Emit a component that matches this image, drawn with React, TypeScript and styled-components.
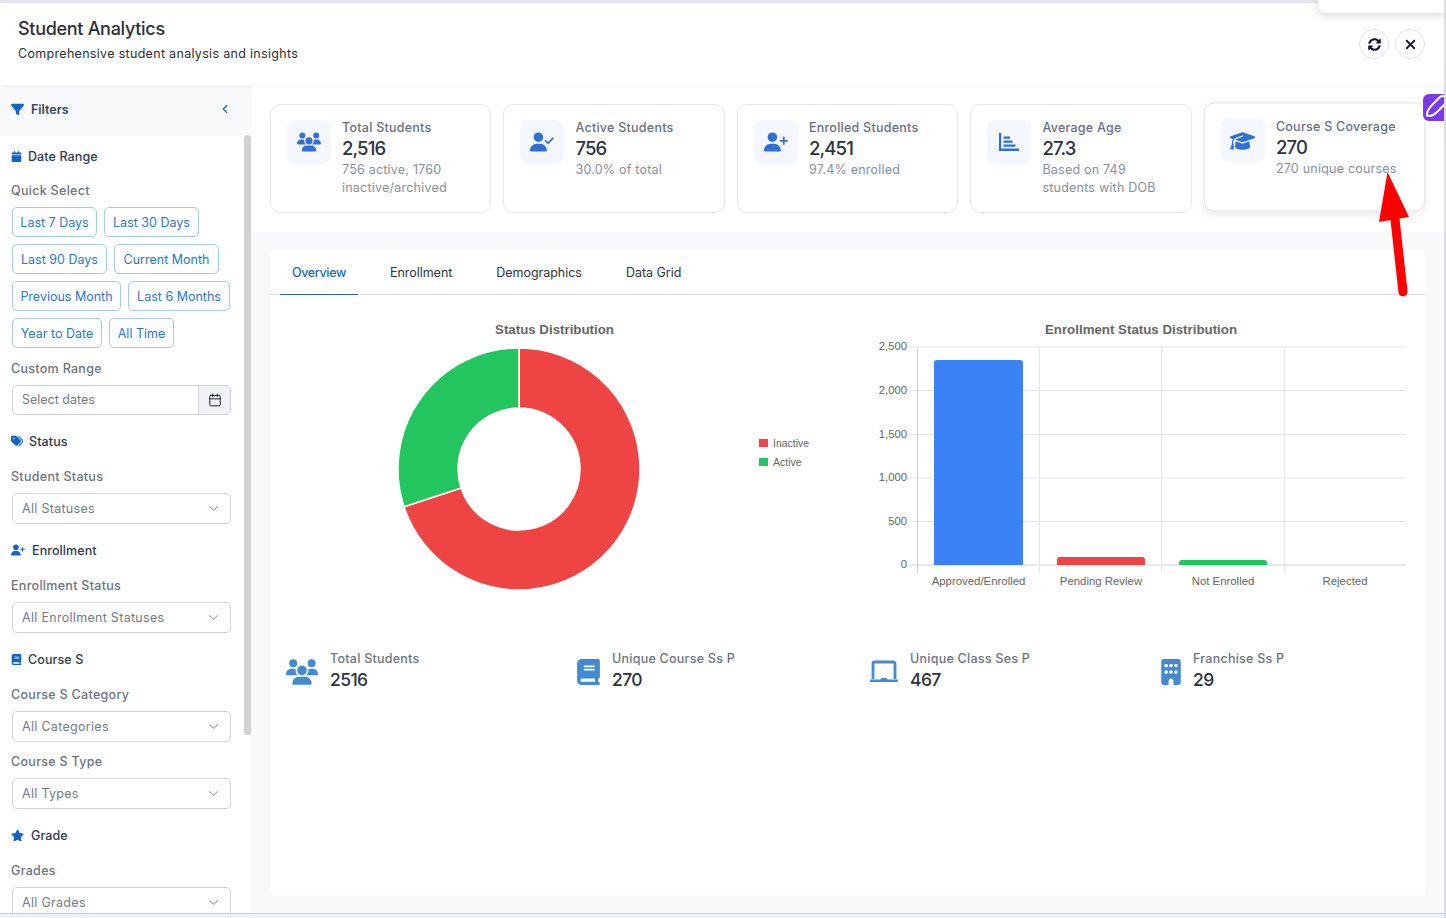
import React from 'react';
import styled, { createGlobalStyle } from 'styled-components';
import { FaUsers, FaUserCheck, FaUserPlus, FaGraduationCap, FaBook, FaBuilding, FaStar, FaTags, FaFilter, FaCalendar, FaXmark } from 'react-icons/fa6';
import { FaSyncAlt } from 'react-icons/fa';
import { ChevronDown, ChevronLeft, Calendar } from 'lucide-react';

const Global = createGlobalStyle`
  html, body { margin: 0; padding: 0; background: #fff; overflow: hidden; }
  * { box-sizing: border-box; }
  body { font-family: Inter, "Noto Sans", sans-serif; }
`;

const Page = styled.div`
  position: relative;
  width: 1446px;
  height: 918px;
  overflow: hidden;
  display: flex;
  flex-direction: column;
  background: #fff;
  border-right: 2px solid #d9dde3;
`;
const TopRule = styled.div`
  height: 3px;
  flex: none;
  background: #e4e8ee;
`;
const Header = styled.header`
  height: 82px;
  flex: none;
  display: flex;
  align-items: flex-start;
  justify-content: space-between;
  padding: 15px 19px 0 18px;
  background: #fff;
  position: relative;
  z-index: 2;
  box-shadow: 0 1px 4px rgba(30, 40, 60, 0.05);
`;
const Title = styled.h1`
  margin: 0;
  font-size: 18px;
  line-height: 22px;
  font-weight: 500;
  letter-spacing: -0.3px;
  color: #2b2f36;
`;
const Subtitle = styled.p`
  margin: 4px 0 0;
  font-size: 12.5px;
  line-height: 20px;
  letter-spacing: 0.31px;
  color: #2b2f36;
`;
const HeaderActions = styled.div`
  display: flex;
  gap: 6px;
  padding-top: 11px;
`;
const RoundButton = styled.button`
  width: 30px;
  height: 30px;
  border-radius: 50%;
  border: 1px solid #dfe2e6;
  background: #fff;
  color: #12152b;
  display: flex;
  align-items: center;
  justify-content: center;
  padding: 0;
  font-size: 13px;
`;
const Body = styled.div`
  flex: 1;
  min-height: 0;
  display: flex;
`;
const Sidebar = styled.aside`
  width: 251px;
  flex: none;
  position: relative;
  display: flex;
  flex-direction: column;
  overflow: hidden;
  background: #fff;
`;
const SidebarHead = styled.div`
  height: 50px;
  flex: none;
  display: flex;
  align-items: center;
  justify-content: space-between;
  padding: 0 19px 2px 11px;
  background: #f8f9fb;
  color: #1565c0;
`;
const FilterTitle = styled.div`
  display: flex;
  align-items: center;
  gap: 7px;
  font-size: 12.5px;
  font-weight: 600;
  color: #3a4656;
  svg { color: #1565c0; }
`;
const SidebarBody = styled.div`
  flex: 1;
  padding: 11px 20px 0 12px;
`;
const Thumb = styled.div`
  position: absolute;
  right: 0;
  top: 50px;
  width: 7px;
  height: 600px;
  border-radius: 4px 4px 3px 3px;
  background: #d2d2d2;
`;
const Heading = styled.div<{ $gap?: number; $after?: number }>`
  display: flex;
  align-items: center;
  gap: ${(p) => p.$gap ?? 6}px;
  height: 20px;
  margin: 0 0 ${(p) => p.$after ?? 16}px -1px;
  font-size: 12.5px;
  font-weight: 500;
  letter-spacing: 0.1px;
  color: #2f3b4c;
  svg { color: #1565c0; }
`;
const Label = styled.div`
  height: 20px;
  line-height: 20px;
  margin: 0 0 6px -1px;
  font-size: 12.5px;
  font-weight: 500;
  letter-spacing: 0.3px;
  color: #6b7480;
`;
const Pills = styled.div`
  display: flex;
  flex-wrap: wrap;
  gap: 7px;
  margin-bottom: 11px;
`;
const Pill = styled.button<{ $w: number }>`
  width: ${(p) => p.$w}px;
  height: 30px;
  padding: 0;
  border: 1px solid #a9c7f5;
  border-radius: 5px;
  background: #fff;
  color: #2a78cf;
  font-family: inherit;
  font-size: 12.5px;
  white-space: nowrap;
`;
const InputGroup = styled.div`
  display: flex;
  height: 29.5px;
  border: 1px solid #cdd2da;
  border-radius: 5px;
  overflow: hidden;
  margin-bottom: 16.5px;
`;
const InputText = styled.div`
  flex: 1;
  display: flex;
  align-items: center;
  padding-left: 9px;
  font-size: 12.5px;
  color: #737c88;
`;
const InputAddon = styled.div`
  width: 32px;
  display: flex;
  align-items: center;
  justify-content: center;
  background: #f0f2f6;
  border-left: 1px solid #cdd2da;
  color: #12152b;
`;
const Select = styled.div<{ $after?: number }>`
  display: flex;
  align-items: center;
  justify-content: space-between;
  height: 30.5px;
  padding: 0 9px;
  border: 1px solid #cdd2da;
  border-radius: 5px;
  margin-bottom: ${(p) => p.$after ?? 16.5}px;
  font-size: 12.5px;
  letter-spacing: 0.3px;
  color: #737c88;
  svg { color: #7a828e; }
`;
const Main = styled.main`
  flex: 1;
  min-width: 0;
  display: flex;
  flex-direction: column;
  background: #f8f9fb;
`;
const CardsBand = styled.section`
  height: 147px;
  flex: none;
  padding: 19px 19px 0;
  background: #fff;
  display: grid;
  grid-template-columns: repeat(5, 1fr);
  gap: 12.4px;
`;
const Card = styled.article<{ $raised?: boolean }>`
  height: 109px;
  display: flex;
  gap: 11px;
  padding: 15px 16px 0 16px;
  background: #fff;
  border: 1px solid #e2e7ef;
  border-radius: 10px;
  ${(p) => p.$raised && 'transform: translateY(-1.5px); box-shadow: 0 3px 9px rgba(30, 40, 70, 0.09);'}
`;
const CardIcon = styled.div`
  width: 44px;
  height: 44px;
  flex: none;
  display: flex;
  align-items: center;
  justify-content: center;
  border-radius: 8px;
  background: #f4f7fe;
  color: #2f6fd6;
`;
const CardText = styled.div`
  min-width: 0;
  flex: 1;
`;
const CardTitle = styled.div`
  font-size: 12.5px;
  font-weight: 500;
  line-height: 16px;
  letter-spacing: 0.25px;
  white-space: nowrap;
  color: #667080;
`;
const CardValue = styled.div`
  font-size: 18.5px;
  font-weight: 500;
  line-height: 25px;
  letter-spacing: -0.85px;
  color: #2b3240;
`;
const CardDesc = styled.div`
  font-size: 12.5px;
  line-height: 18px;
  letter-spacing: 0.22px;
  color: #87909d;
`;
const Panel = styled.section`
  width: 1155px;
  height: 644px;
  margin: 19px 0 0 19px;
  background: #fff;
`;
const Tabs = styled.nav`
  height: 44px;
  display: flex;
  gap: 20px;
  padding-left: 10px;
  border-bottom: 1px solid #dcdfe4;
`;
const Tab = styled.div<{ $active?: boolean }>`
  height: 44px;
  padding: 0 12px;
  display: flex;
  align-items: center;
  font-size: 12.5px;
  font-weight: ${(p) => (p.$active ? 500 : 400)};
  letter-spacing: ${(p) => (p.$active ? '-0.35px' : '-0.03px')};
  color: ${(p) => (p.$active ? '#2468b4' : '#2d3440')};
  border-bottom: ${(p) => (p.$active ? '1px solid #2468b4' : '1px solid transparent')};
`;
const Charts = styled.div`
  display: grid;
  grid-template-columns: 568px 568px;
  gap: 19px;
  height: 300px;
  margin-top: 20px;
`;
const ChartSvg = styled.svg`
  display: block;
  font-family: "Liberation Sans", Arial, sans-serif;
`;
const Stats = styled.div`
  display: grid;
  grid-template-columns: 291px 293px 291px 1fr;
  padding: 36px 0 0 16px;
`;
const Stat = styled.div`
  display: flex;
  align-items: center;
  gap: 12px;
  color: #428bd2;
`;
const StatIcon = styled.div<{ $w: number }>`
  width: ${(p) => p.$w}px;
  flex: none;
  display: flex;
  align-items: center;
  justify-content: center;
`;
const StatLabel = styled.div`
  font-size: 12.5px;
  font-weight: 500;
  line-height: 16px;
  letter-spacing: 0.25px;
  color: #6b7480;
`;
const StatValue = styled.div`
  font-size: 17.5px;
  font-weight: 500;
  line-height: 26px;
  letter-spacing: -0.6px;
  color: #2b3240;
`;
const BottomRule = styled.div`
  height: 5px;
  flex: none;
  background: #eef2f7;
  border-top: 1px solid #c5ccd6;
`;
const Popover = styled.div`
  position: absolute;
  top: 0;
  right: 0;
  width: 126px;
  height: 13px;
  background: #fff;
  border-radius: 0 0 0 8px;
  box-shadow: 0 2px 10px rgba(0, 0, 0, 0.18);
  z-index: 5;
`;
const PenTab = styled.div`
  position: absolute;
  top: 92px;
  right: -2px;
  width: 25px;
  height: 31px;
  padding: 2px 0 2px 2px;
  background: #fff;
  z-index: 5;
`;
const PenInner = styled.div`
  width: 100%;
  height: 100%;
  overflow: hidden;
  border-radius: 6px 0 0 6px;
  background: #7c3aed;
`;
const Arrow = styled.svg`
  position: absolute;
  left: 1370px;
  top: 165px;
  z-index: 6;
`;

const ChartIcon = () => (
  <svg width="20" height="18" viewBox="0 0 20 18" fill="currentColor">
    <path d="M0 0h2.2v15.6H20V18H0z" />
    <path d="M4.500 3.500h6.500v2.200H4.500zM4.500 7.500h9v2.200h-9zM4.500 11.500h12v2.200h-12z" />
  </svg>
);
const LaptopIcon = () => (
  <svg width="28" height="24" viewBox="0 0 28 24" fill="none">
    <path d="M3 19V3.500A1.500 1.500 0 0 1 4.500 2h19A1.500 1.500 0 0 1 25 3.500V19" stroke="currentColor" strokeWidth="2.800" />
    <path d="M0 19.500h10.500l1-1.500h5l1 1.500H28v1.200a1.300 1.300 0 0 1-1.300 1.300H1.300A1.300 1.300 0 0 1 0 20.700z" fill="currentColor" />
  </svg>
);

const pills: [string, number][] = [
  ['Last 7 Days', 85], ['Last 30 Days', 95], ['Last 90 Days', 95], ['Current Month', 105],
  ['Previous Month', 109], ['Last 6 Months', 102], ['Year to Date', 90], ['All Time', 65],
];

const cards = [
  { icon: <FaUsers size={24} />, title: 'Total Students', value: '2,516', desc: '756 active, 1760 inactive/archived' },
  { icon: <FaUserCheck size={24} />, title: 'Active Students', value: '756', desc: '30.0% of total' },
  { icon: <FaUserPlus size={24} />, title: 'Enrolled Students', value: '2,451', desc: '97.4% enrolled' },
  { icon: <ChartIcon />, title: 'Average Age', value: '27.3', desc: 'Based on 749 students with DOB' },
  { icon: <FaGraduationCap size={25} />, title: 'Course S Coverage', value: '270', desc: '270 unique courses', raised: true },
];

const Dropdown = ({ text, after }: { text: string; after?: number }) => (
  <Select $after={after}>
    {text}
    <ChevronDown size={15} strokeWidth={1.5} />
  </Select>
);

const polar = (cx: number, cy: number, r: number, deg: number) => {
  const a = (deg * Math.PI) / 180;
  return [cx + r * Math.sin(a), cy - r * Math.cos(a)];
};
const arc = (cx: number, cy: number, R: number, r: number, a: number, b: number) => {
  const [x1, y1] = polar(cx, cy, R, a);
  const [x2, y2] = polar(cx, cy, R, b - 0.001);
  const [x3, y3] = polar(cx, cy, r, b - 0.001);
  const [x4, y4] = polar(cx, cy, r, a);
  const large = b - a > 180 ? 1 : 0;
  return `M${x1} ${y1}A${R} ${R} 0 ${large} 1 ${x2} ${y2}L${x3} ${y3}A${r} ${r} 0 ${large} 0 ${x4} ${y4}Z`;
};

const DonutChart = () => (
  <ChartSvg width="568" height="300" viewBox="0 0 568 300">
    <text x="284.500" y="19" textAnchor="middle" fontSize="13.300" fontWeight="700" fill="#666">Status Distribution</text>
    <path d={arc(249, 154, 121, 61, 0, 251.8)} fill="#ef4444" stroke="#fff" strokeWidth="1.500" />
    <path d={arc(249, 154, 121, 61, 251.8, 360)} fill="#22c55e" stroke="#fff" strokeWidth="1.500" />
    <rect x="489" y="124" width="9" height="8" fill="#ef4444" />
    <text x="503" y="131.500" fontSize="10.500" fill="#666">Inactive</text>
    <rect x="489" y="143" width="9" height="8" fill="#22c55e" />
    <text x="503" y="150.500" fontSize="10.500" fill="#666">Active</text>
  </ChartSvg>
);

const yTicks = [['2,500', 32], ['2,000', 75.5], ['1,500', 119.5], ['1,000', 163], ['500', 206.5], ['0', 250]] as const;
const xGrid = [60, 182, 304, 427];
const bars = [
  { x: 77, y: 45, w: 89, c: '#3b82f6', label: 'Approved/Enrolled', cx: 121.5 },
  { x: 200, y: 242, w: 88, c: '#ef4444', label: 'Pending Review', cx: 244 },
  { x: 322, y: 245, w: 88, c: '#22c55e', label: 'Not Enrolled', cx: 366 },
  { x: 0, y: 250, w: 0, c: 'none', label: 'Rejected', cx: 488 },
];

const BarChart = () => (
  <ChartSvg width="568" height="300" viewBox="0 0 568 300">
    <text x="284" y="19" textAnchor="middle" fontSize="13.300" fontWeight="700" fill="#666">Enrollment Status Distribution</text>
    {yTicks.map(([t, y]) => (
      <g key={t}>
        <line x1="53" x2="549" y1={y} y2={y} stroke={y === 250 ? '#cfcfcf' : '#e6e6e6'} />
        <text x="50" y={y + 3} textAnchor="end" fontSize="11.300" fill="#666">{t}</text>
      </g>
    ))}
    {xGrid.map((x, i) => (
      <line key={x} x1={x + 0.5} x2={x + 0.5} y1="32" y2="258" stroke={i === 0 ? '#cfcfcf' : '#e6e6e6'} />
    ))}
    {bars.map((b) => (
      <g key={b.label}>
        {b.w > 0 && (
          <path d={`M${b.x} 250V${b.y + 3}a3 3 0 0 1 3-3H${b.x + b.w - 3}a3 3 0 0 1 3 3V250Z`} fill={b.c} />
        )}
        <text x={b.cx} y="270" textAnchor="middle" fontSize="11.400" fill="#666">{b.label}</text>
      </g>
    ))}
  </ChartSvg>
);

export default function App() {
  return (
    <Page>
      <Global />
      <TopRule />
      <Header>
        <div>
          <Title>Student Analytics</Title>
          <Subtitle>Comprehensive student analysis and insights</Subtitle>
        </div>
        <HeaderActions>
          <RoundButton aria-label="Refresh"><FaSyncAlt size={13} /></RoundButton>
          <RoundButton aria-label="Close"><FaXmark size={15} /></RoundButton>
        </HeaderActions>
      </Header>
      <Body>
        <Sidebar>
          <SidebarHead>
            <FilterTitle><FaFilter size={13} />Filters</FilterTitle>
            <ChevronLeft size={14} strokeWidth={2} />
          </SidebarHead>
          <SidebarBody>
            <Heading $after={15}><FaCalendar size={11} />Date Range</Heading>
            <Label>Quick Select</Label>
            <Pills>
              {pills.map(([t, w]) => <Pill key={t} $w={w}>{t}</Pill>)}
            </Pills>
            <Label>Custom Range</Label>
            <InputGroup>
              <InputText>Select dates</InputText>
              <InputAddon><Calendar size={14} strokeWidth={1.6} /></InputAddon>
            </InputGroup>
            <Heading $gap={6}><FaTags size={12} />Status</Heading>
            <Label>Student Status</Label>
            <Dropdown text="All Statuses" />
            <Heading $gap={7}><FaUserPlus size={14} />Enrollment</Heading>
            <Label>Enrollment Status</Label>
            <Dropdown text="All Enrollment Statuses" />
            <Heading><FaBook size={11} />Course S</Heading>
            <Label>Course S Category</Label>
            <Dropdown text="All Categories" after={10.5} />
            <Label>Course S Type</Label>
            <Dropdown text="All Types" />
            <Heading $gap={7}><FaStar size={13} />Grade</Heading>
            <Label>Grades</Label>
            <Dropdown text="All Grades" />
          </SidebarBody>
          <Thumb />
        </Sidebar>
        <Main>
          <CardsBand>
            {cards.map((c) => (
              <Card key={c.title} $raised={c.raised}>
                <CardIcon>{c.icon}</CardIcon>
                <CardText>
                  <CardTitle>{c.title}</CardTitle>
                  <CardValue>{c.value}</CardValue>
                  <CardDesc>{c.desc}</CardDesc>
                </CardText>
              </Card>
            ))}
          </CardsBand>
          <Panel>
            <Tabs>
              <Tab $active>Overview</Tab>
              <Tab>Enrollment</Tab>
              <Tab>Demographics</Tab>
              <Tab>Data Grid</Tab>
            </Tabs>
            <Charts>
              <DonutChart />
              <BarChart />
            </Charts>
            <Stats>
              <Stat><StatIcon $w={32}><FaUsers size={32} /></StatIcon><div><StatLabel>Total Students</StatLabel><StatValue>2516</StatValue></div></Stat>
              <Stat><StatIcon $w={23}><FaBook size={26} /></StatIcon><div><StatLabel>Unique Course Ss P</StatLabel><StatValue>270</StatValue></div></Stat>
              <Stat><StatIcon $w={28}><LaptopIcon /></StatIcon><div><StatLabel>Unique Class Ses P</StatLabel><StatValue>467</StatValue></div></Stat>
              <Stat><StatIcon $w={20}><FaBuilding size={26} /></StatIcon><div><StatLabel>Franchise Ss P</StatLabel><StatValue>29</StatValue></div></Stat>
            </Stats>
          </Panel>
        </Main>
      </Body>
      <BottomRule />
      <Popover />
      <PenTab>
        <PenInner>
          <svg width="23" height="27" viewBox="0 0 23 27" fill="none">
            <path d="M4 21.500C3.500 18 6 14 10 10L17 3c2-1.500 6-1 7 1 1 2-.5 4.500-2 6l-8 8c-3 3-7 4.500-10 3.500z" stroke="#fff" strokeWidth="2" />
          </svg>
        </PenInner>
      </PenTab>
      <Arrow width="45" height="135" viewBox="0 0 45 135">
        <path d="M17.500 7L39 52l-9.500 1.500L37.500 126a4.500 4.500 0 0 1-9 1.500L20.500 55 9 57z" fill="#ff0000" />
      </Arrow>
    </Page>
  );
}
